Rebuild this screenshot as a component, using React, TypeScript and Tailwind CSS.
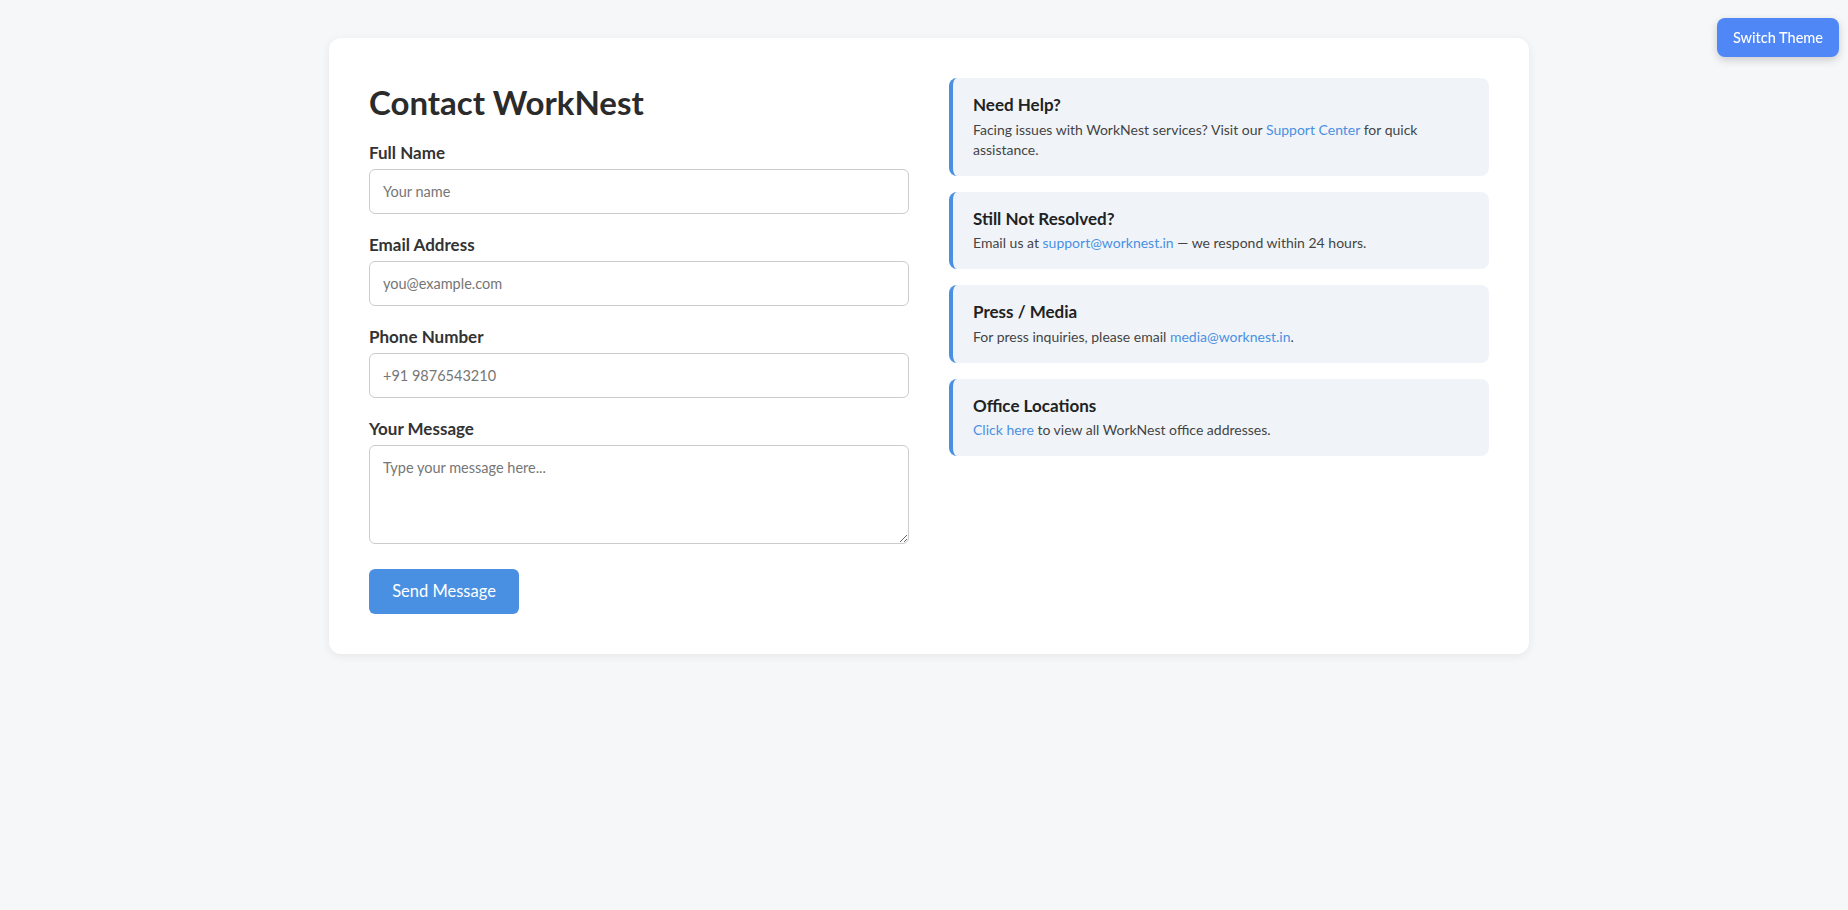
import { useState } from "react";

const helpCards = [
  {
    title: "Need Help?",
    body: (
      <>
        Facing issues with WorkNest services? Visit our{" "}
        <a href="#" className="text-[#4a90e2]">
          Support Center
        </a>{" "}
        for quick assistance.
      </>
    ),
  },
  {
    title: "Still Not Resolved?",
    body: (
      <>
        Email us at{" "}
        <a href="#" className="text-[#4a90e2]">
          support@worknest.in
        </a>{" "}
        — we respond within 24 hours.
      </>
    ),
  },
  {
    title: "Press / Media",
    body: (
      <>
        For press inquiries, please email{" "}
        <a href="#" className="text-[#4a90e2]">
          media@worknest.in
        </a>
        .
      </>
    ),
  },
  {
    title: "Office Locations",
    body: (
      <>
        <a href="#" className="text-[#4a90e2]">
          Click here
        </a>{" "}
        to view all WorkNest office addresses.
      </>
    ),
  },
];

function Field({
  label,
  placeholder,
  type = "text",
}: {
  label: string;
  placeholder: string;
  type?: string;
}) {
  return (
    <div className="flex flex-col">
      <label className="text-[17px] leading-6 font-bold text-[#333]">
        {label}
      </label>
      <input
        type={type}
        placeholder={placeholder}
        className="mt-[4px] h-[45px] w-full rounded-md border border-[#ccc] bg-white px-[13px] text-[14.5px] text-[#333] placeholder:text-[#767676] outline-none"
      />
    </div>
  );
}

export default function App() {
  const [dark, setDark] = useState(false);

  return (
    <div
      className="min-h-[910px] bg-[#f6f7f9] pl-[10px] pt-[38px] text-[#333]"
      style={{ fontFamily: "Lato, 'Noto Sans', sans-serif" }}
    >
      <button
        onClick={() => setDark(!dark)}
        className="fixed right-[9px] top-[18px] h-[39px] w-[122px] rounded-lg bg-[#4f87f6] text-[14.5px] font-medium text-white shadow-[0_3px_8px_rgba(0,0,0,0.18)]"
      >
        Switch Theme
      </button>

      <div className="mx-auto flex w-[1200px] gap-10 rounded-xl bg-white p-10 shadow-[0_2px_10px_rgba(0,0,0,0.07)]">
        {/* form */}
        <div className="w-[540px]">
          <h1 className="mb-[15px] text-[33px] leading-[48px] font-bold text-[#2b2b2b]">
            Contact WorkNest
          </h1>
          <div className="flex flex-col gap-[19px]">
            <Field label="Full Name" placeholder="Your name" />
            <Field label="Email Address" placeholder="you@example.com" type="email" />
            <Field label="Phone Number" placeholder="+91 9876543210" type="tel" />
            <div className="flex flex-col">
              <label className="text-[17px] leading-6 font-bold text-[#333]">
                Your Message
              </label>
              <textarea
                placeholder="Type your message here..."
                className="mt-[4px] block h-[99px] w-full resize-y rounded-md border border-[#ccc] bg-white px-[13px] py-[11px] text-[14.5px] text-[#333] placeholder:text-[#767676] outline-none"
              />
            </div>
          </div>
          <button className="mt-[25px] h-[45px] w-[150px] rounded-md bg-[#4a90e2] text-[16.5px] text-white">
            Send Message
          </button>
        </div>

        {/* help cards */}
        <div className="flex w-[540px] flex-col gap-4">
          {helpCards.map((c) => (
            <div
              key={c.title}
              className="rounded-lg border-l-4 border-[#4a90e2] bg-[#f0f4f9] py-4 pl-[20px] pr-5"
            >
              <h3 className="text-[17px] leading-[21.5px] font-bold text-[#222]">
                {c.title}
              </h3>
              <p className="mt-1 text-[14px] leading-5 text-[#444]">{c.body}</p>
            </div>
          ))}
        </div>
      </div>
    </div>
  );
}
